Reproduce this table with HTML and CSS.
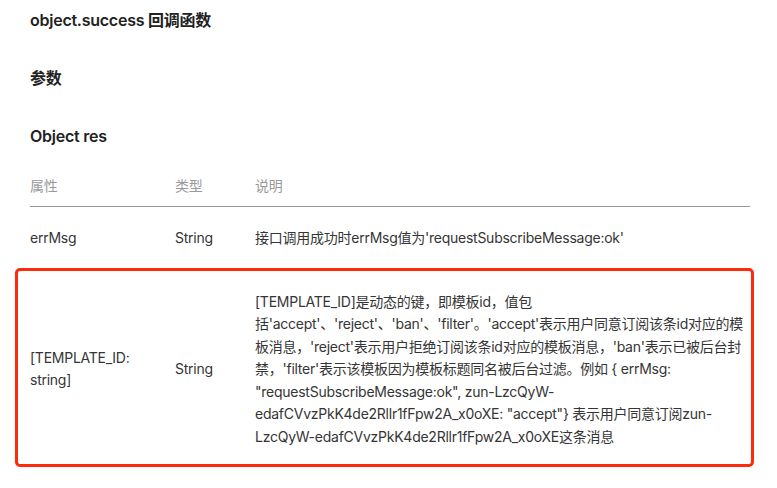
FILE: index.html
```html
<!DOCTYPE html>
<html lang="zh">
  <head>
    <meta charset="UTF-8" />
    <title>object.success 回调函数</title>
    <link rel="stylesheet" href="styles.css">
  </head>
  <body>
    <div class="doc">
      <h3 class="title">object.success 回调函数</h3>
      <h4 class="title">参数</h4>
      <h4 class="title title-last">Object res</h4>

      <div class="table-wrap">
        <table class="params">
          <thead>
            <tr>
              <th class="col-name">属性</th>
              <th class="col-type">类型</th>
              <th class="col-desc">说明</th>
            </tr>
          </thead>
          <tbody>
            <tr>
              <td>errMsg</td>
              <td>String</td>
              <td class="desc">接口调用成功时errMsg值为'requestSubscribeMessage:ok'</td>
            </tr>
            <tr class="row-tall">
              <td>[TEMPLATE_ID: string]</td>
              <td>String</td>
              <td class="desc">[TEMPLATE_ID]是动态的键，即模板id，值包括'accept'、'reject'、'ban'、'filter'。'accept'表示用户同意订阅该条id对应的模板消息，'reject'表示用户拒绝订阅该条id对应的模板消息，'ban'表示已被后台封禁，'filter'表示该模板因为模板标题同名被后台过滤。例如 { errMsg: "requestSubscribeMessage:ok", zun-LzcQyW-edafCVvzPkK4de2Rllr1fFpw2A_x0oXE: "accept"} 表示用户同意订阅zun-LzcQyW-edafCVvzPkK4de2Rllr1fFpw2A_x0oXE这条消息</td>
            </tr>
          </tbody>
        </table>
        <!-- 标注框 -->
        <div class="highlight"></div>
      </div>
    </div>
  </body>
</html>
```

FILE: styles.css
```css
body {
  margin: 0;
  padding: 0;
  background-color: white;
  color: #333;
  font-family: Inter, "Noto Sans CJK SC", sans-serif;
  font-size: 14px;
  letter-spacing: -0.25px;
}

.doc {
  padding: 8px 27px 0 30px;
}

.title {
  margin: 0 0 34px;
  font-size: 16px;
  line-height: 24px;
  font-weight: 600;
  color: #222;
}

.title-last {
  margin-bottom: 21px;
}

.table-wrap {
  position: relative;
}

.params {
  width: 720px;
  border-collapse: collapse;
  table-layout: fixed;
}

.params th {
  padding: 6px 10px 9px 0;
  text-align: left;
  font-weight: normal;
  color: #999;
  line-height: 22px;
  border-bottom: 1px solid #999;
}

.params td {
  padding: 20px 10px 20px 0;
  line-height: 22.5px;
  vertical-align: middle;
  color: #353535;
}

.params .desc {
  padding-right: 0;
}

.col-name {
  width: 135px;
}

.col-type {
  width: 70px;
}

.row-tall td {
  padding-top: 21px;
}

.highlight {
  position: absolute;
  left: -15px;
  top: 99px;
  width: 733px;
  height: 193px;
  border: 3px solid #fd2a0c;
  border-radius: 5px;
}
```
